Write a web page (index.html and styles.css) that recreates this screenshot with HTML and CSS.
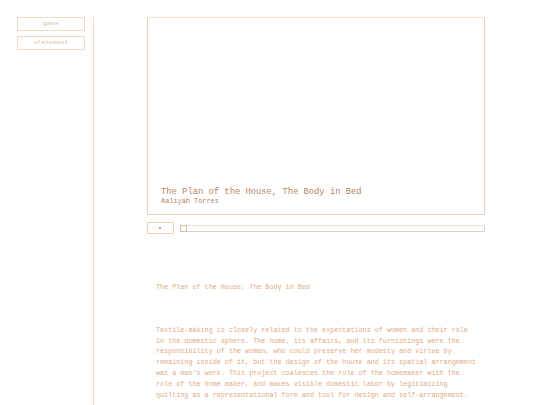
FILE: index.html
```html
<!DOCTYPE html>
<html>
<head>
<meta charset="utf-8">
<link rel="stylesheet" href="styles.css">
</head>
<body>
<div class="page">
  <nav class="nav">
    <div class="nav-btn">game</div>
    <div class="nav-btn">statement</div>
  </nav>
  <div class="divider"></div>
  <main class="main">
    <div class="stage">
      <div class="stage-title">The Plan of the House, The Body in Bed</div>
      <div class="stage-author">Aaliyah Torres</div>
    </div>
    <div class="controls">
      <div class="play">&#9654;</div>
      <div class="progress"><div class="handle"></div></div>
    </div>
    <section class="statement">
      <h2 class="statement-title">The Plan of the House, The Body in Bed</h2>
      <p class="statement-text">Textile-making is closely related to the expectations of women and their role in the domestic sphere. The home, its affairs, and its furnishings were the responsibility of the woman, who could preserve her modesty and virtue by remaining inside of it, but the design of the house and its spatial arrangement was a man's work. This project coalesces the role of the homemaker with the role of the home maker, and makes visible domestic labor by legitimizing quilting as a representational form and tool for design and self-arrangement.</p>
    </section>
  </main>
</div>
</body>
</html>
```

FILE: styles.css
```css
html, body {
  margin: 0;
  padding: 0;
  background: #ffffff;
}
body {
  font-family: "Liberation Mono", "DejaVu Sans Mono", monospace;
  color: #e0aa86;
}
.page {
  display: flex;
  align-items: stretch;
  min-height: 100vh;
}
.nav {
  display: flex;
  flex-direction: column;
  gap: 5px;
  padding: 17px 0 0 17px;
  width: 68px;
}
.nav-btn {
  box-sizing: border-box;
  height: 14px;
  border: 1px solid #efd9c7;
  font-size: 6px;
  letter-spacing: 0.3px;
  line-height: 12px;
  text-align: center;
  color: #d9baa3;
}
.divider {
  margin: 17px 0 0 8px;
  width: 1px;
  background: #f0d9c7;
}
.main {
  margin-left: 53px;
  padding-top: 17px;
  width: 338px;
}
.stage {
  box-sizing: border-box;
  width: 338px;
  height: 198px;
  border: 1px solid #e9d1bc;
  border-top-color: #f8e3d3;
  display: flex;
  flex-direction: column;
  justify-content: flex-end;
  padding: 0 13px 9px 13px;
}
.stage-title {
  font-size: 8.8px;
  line-height: 9px;
  color: #b5845f;
}
.stage-author {
  font-size: 6.9px;
  line-height: 8px;
  color: #b5845f;
}
.controls {
  display: flex;
  align-items: center;
  gap: 6px;
  margin-top: 7px;
}
.play {
  box-sizing: border-box;
  width: 27px;
  height: 12px;
  border: 1px solid #e9d1bc;
  font-size: 4px;
  line-height: 10px;
  text-align: center;
  color: #b5845f;
}
.progress {
  box-sizing: border-box;
  flex: 1;
  height: 7px;
  border: 1px solid #e5cdb8;
  border-top-color: #f6e0cf;
  position: relative;
}
.handle {
  position: absolute;
  left: -1px;
  top: -1px;
  width: 7px;
  height: 7px;
  box-sizing: border-box;
  border: 1px solid #d9bda5;
  background: #fff;
}
.statement {
  padding-left: 9px;
}
.statement-title {
  margin: 48px 0 0 0;
  font-weight: normal;
  font-size: 6.75px;
  line-height: 10.8px;
  color: #e0aa86;
}
.statement-text {
  margin: 32px 0 0 0;
  font-size: 6.75px;
  line-height: 10.8px;
  color: #e0aa86;
  width: 322px;
}
```
